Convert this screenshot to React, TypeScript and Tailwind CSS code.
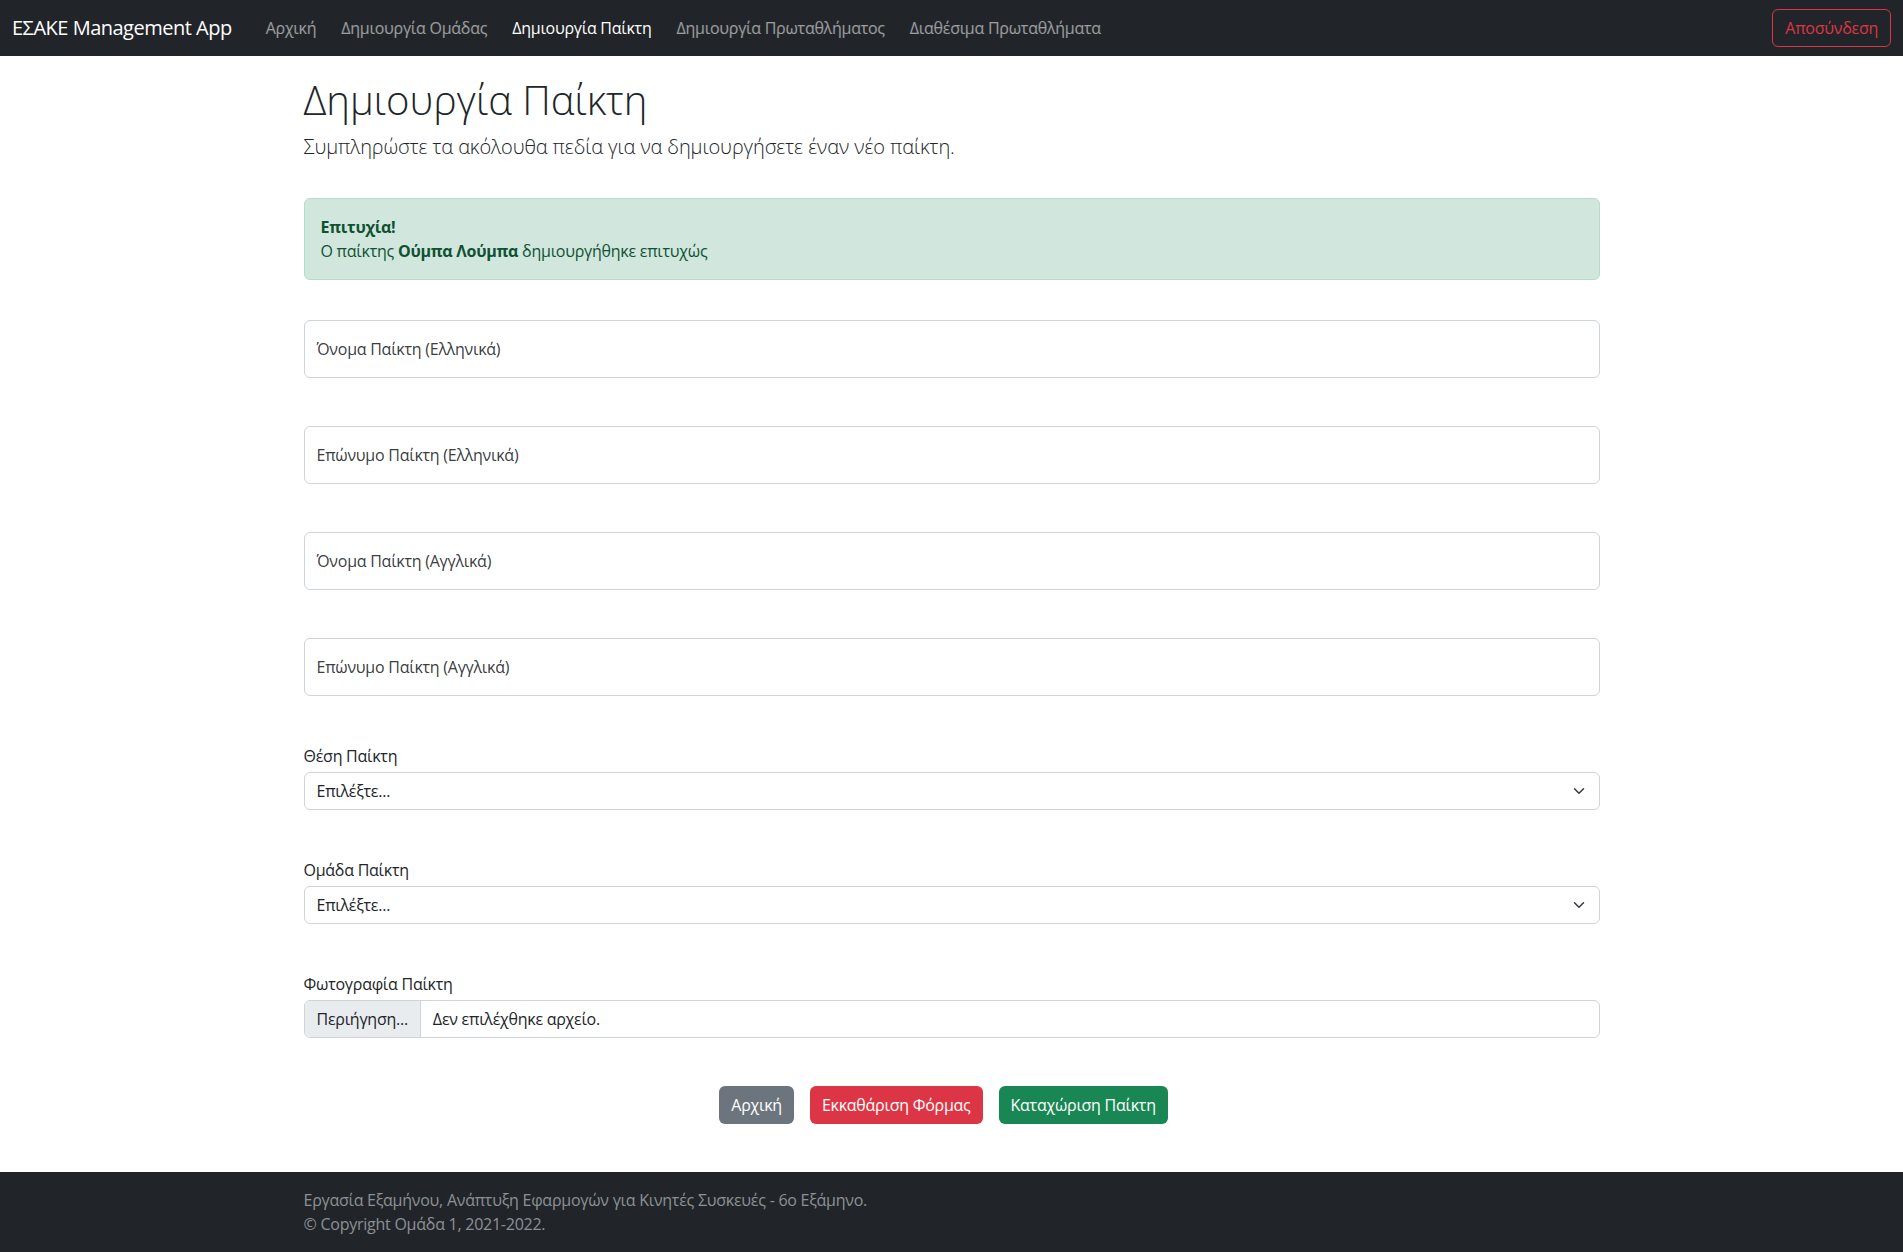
import React from 'react';

const navLinks = [
  { text: 'Αρχική', active: false },
  { text: 'Δημιουργία Ομάδας', active: false },
  { text: 'Δημιουργία Παίκτη', active: true },
  { text: 'Δημιουργία Πρωταθλήματος', active: false },
  { text: 'Διαθέσιμα Πρωταθλήματα', active: false },
];

const floatingFields = [
  'Όνομα Παίκτη (Ελληνικά)',
  'Επώνυμο Παίκτη (Ελληνικά)',
  'Όνομα Παίκτη (Αγγλικά)',
  'Επώνυμο Παίκτη (Αγγλικά)',
];

const Chevron = () => (
  <svg viewBox="0 0 16 16" className="w-4 h-3" aria-hidden="true">
    <path
      fill="none"
      stroke="#343a40"
      strokeLinecap="round"
      strokeLinejoin="round"
      strokeWidth="2"
      d="m2 5 6 6 6-6"
    />
  </svg>
);

const SelectField = ({ label }: { label: string }) => (
  <div className="mb-12">
    <label className="block leading-6 mb-1">{label}</label>
    <div className="h-[38px] border border-[#ced4da] rounded-md bg-white flex items-center justify-between pl-3 pr-3">
      <span className="text-base">Επιλέξτε...</span>
      <Chevron />
    </div>
  </div>
);

const App = () => {
  return (
    <div className="min-h-screen flex flex-col bg-white text-[#212529] tracking-[-0.25px] font-['Segoe_UI','Open_Sans',sans-serif]">
      {/* Top navbar */}
      <nav className="h-14 bg-[#212529] flex items-center px-3">
        <span className="text-white text-xl leading-[30px] tracking-[-0.5px] mr-[34px]">ΕΣΑΚΕ Management App</span>
        <ul className="flex items-center gap-[25px]">
          {navLinks.map(({ text, active }) => (
            <li
              key={text}
              className={active ? 'text-white leading-6' : 'text-white/55 leading-6'}
            >
              {text}
            </li>
          ))}
        </ul>
        <button className="ml-auto h-[38px] px-3 border border-[#dc3545] text-[#dc3545] rounded-md leading-6">
          Αποσύνδεση
        </button>
      </nav>

      {/* Main content */}
      <main className="flex-1 w-[1320px] mx-auto px-3">
        <h1 className="mt-5 mb-2 text-[40px] leading-[48px] font-light tracking-normal">Δημιουργία Παίκτη</h1>
        <p className="text-xl leading-[30px] font-light tracking-[-0.1px]">
          Συμπληρώστε τα ακόλουθα πεδία για να δημιουργήσετε έναν νέο παίκτη.
        </p>

        <div className="mt-9 mb-10 bg-[#d1e7dd] border border-[#badbcc] text-[#0f5132] rounded-md p-4 leading-6">
          <div className="font-bold">Επιτυχία!</div>
          <div>
            Ο παίκτης <strong className="font-bold">Ούμπα Λούμπα</strong> δημιουργήθηκε επιτυχώς
          </div>
        </div>

        {floatingFields.map((label) => (
          <div
            key={label}
            className="mb-12 h-[58px] border border-[#ced4da] rounded-md bg-white flex items-center px-3"
          >
            <span className="text-[#212529]/90">{label}</span>
          </div>
        ))}

        <SelectField label="Θέση Παίκτη" />
        <SelectField label="Ομάδα Παίκτη" />

        <div className="mb-12">
          <label className="block leading-6 mb-1">Φωτογραφία Παίκτη</label>
          <div className="h-[38px] border border-[#ced4da] rounded-md bg-white flex overflow-hidden">
            <span className="bg-[#e9ecef] border-r border-[#ced4da] px-3 flex items-center">Περιήγηση...</span>
            <span className="px-3 flex items-center">Δεν επιλέχθηκε αρχείο.</span>
          </div>
        </div>

        <div className="mb-12 flex justify-center">
          <button className="me-4 h-[38px] px-3 rounded-md bg-[#6c757d] text-white leading-6">Αρχική</button>
          <button className="me-4 h-[38px] px-3 rounded-md bg-[#dc3545] text-white leading-6">Εκκαθάριση Φόρμας</button>
          <button className="me-4 h-[38px] px-3 rounded-md bg-[#198754] text-white leading-6">Καταχώριση Παίκτη</button>
        </div>
      </main>

      {/* Footer */}
      <footer className="bg-[#212529] py-4">
        <div className="w-[1320px] mx-auto px-3 text-[#8c9196] leading-6">
          <p>Εργασία Εξαμήνου, Ανάπτυξη Εφαρμογών για Κινητές Συσκευές - 6ο Εξάμηνο.</p>
          <p>© Copyright Ομάδα 1, 2021-2022.</p>
        </div>
      </footer>
    </div>
  );
};

export default App;
